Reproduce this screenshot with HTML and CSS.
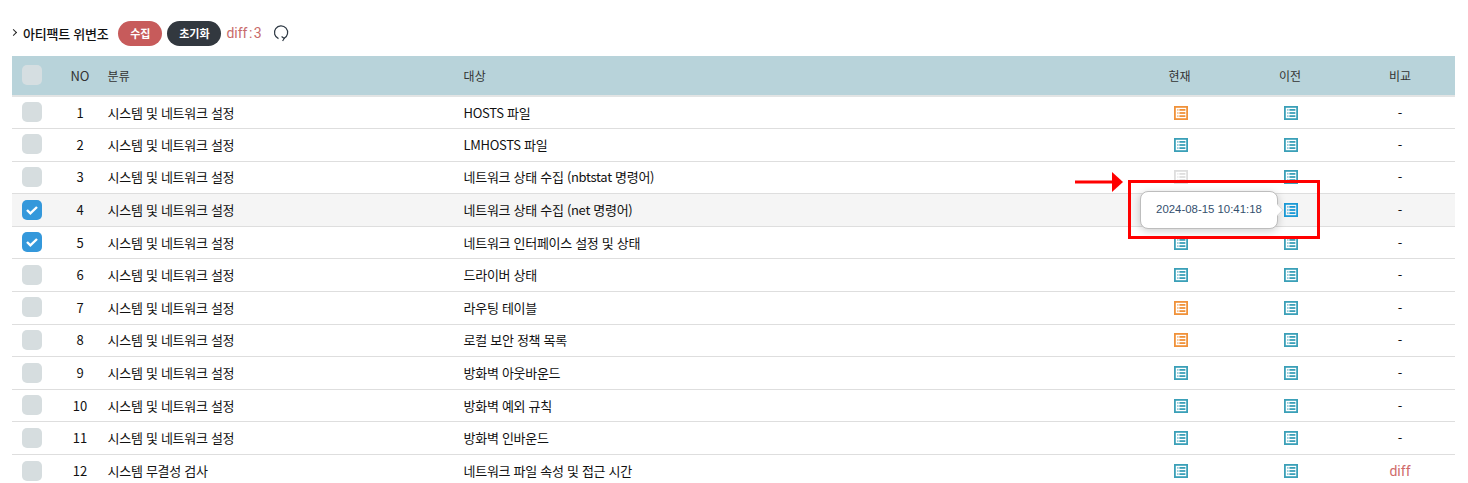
FILE: index.html
```html
<!DOCTYPE html>
<html lang="ko">
<head>
<meta charset="utf-8">
<title>아티팩트 위변조</title>
<link rel="stylesheet" href="styles.css">
</head>
<body>
<svg width="0" height="0" class="defs">
  <symbol id="doc" viewBox="0 0 14 14">
    <rect x="0.9" y="0.9" width="12.2" height="12.2" fill="none" stroke="currentColor" stroke-width="1.8"/>
    <rect x="3" y="3" width="1.6" height="1.8" fill="currentColor" opacity=".55"/>
    <rect x="5.4" y="3" width="6" height="1.8" fill="currentColor"/>
    <rect x="3" y="6.1" width="1.6" height="1.8" fill="currentColor" opacity=".55"/>
    <rect x="5.4" y="6.1" width="6" height="1.8" fill="currentColor"/>
    <rect x="3" y="9.2" width="1.6" height="1.8" fill="currentColor" opacity=".55"/>
    <rect x="5.4" y="9.2" width="6" height="1.8" fill="currentColor"/>
  </symbol>
</svg>
<div class="title-bar">
  <span class="chevron"></span>
  <strong class="title">아티팩트 위변조</strong>
  <button class="pill pill-red">수집</button>
  <button class="pill pill-dark">초기화</button>
  <span class="diff-count">diff : 3</span>
  <svg class="refresh" width="16" height="18" viewBox="0 0 16 18"><path d="M5.5 14.6A6.6 6.6 0 1 1 11 14.4" fill="none" stroke="#2f3a45" stroke-width="1.2"/><path d="M8.6 12.6l2.6 1.9-1.6 2.5" fill="none" stroke="#2f3a45" stroke-width="1.2"/></svg>
</div>
<table class="grid">
  <colgroup><col class="c-check"><col class="c-no"><col class="c-cat"><col class="c-target"><col class="c-cur"><col class="c-prev"><col class="c-cmp"></colgroup>
  <thead>
    <tr><th><span class="box"></span></th><th class="num">NO</th><th class="left">분류</th><th class="left">대상</th><th>현재</th><th>이전</th><th>비교</th></tr>
  </thead>
  <tbody>
    <tr><td><span class="box"></span></td><td class="num">1</td><td class="left">시스템 및 네트워크 설정</td><td class="left">HOSTS 파일</td><td><svg class="ico orange"><use href="#doc"/></svg></td><td><svg class="ico teal"><use href="#doc"/></svg></td><td>-</td></tr>
    <tr><td><span class="box"></span></td><td class="num">2</td><td class="left">시스템 및 네트워크 설정</td><td class="left">LMHOSTS 파일</td><td><svg class="ico teal"><use href="#doc"/></svg></td><td><svg class="ico teal"><use href="#doc"/></svg></td><td>-</td></tr>
    <tr><td><span class="box"></span></td><td class="num">3</td><td class="left">시스템 및 네트워크 설정</td><td class="left">네트워크 상태 수집 (nbtstat 명령어)</td><td><svg class="ico faded"><use href="#doc"/></svg></td><td><svg class="ico teal"><use href="#doc"/></svg></td><td>-</td></tr>
    <tr class="hover"><td><span class="box on"><svg width="14" height="12" viewBox="0 0 14 12"><path d="M2 6l3.4 3.4L12 3" fill="none" stroke="#fff" stroke-width="2.4"/></svg></span></td><td class="num">4</td><td class="left">시스템 및 네트워크 설정</td><td class="left">네트워크 상태 수집 (net 명령어)</td><td></td><td><svg class="ico blue"><use href="#doc"/></svg></td><td>-</td></tr>
    <tr><td><span class="box on"><svg width="14" height="12" viewBox="0 0 14 12"><path d="M2 6l3.4 3.4L12 3" fill="none" stroke="#fff" stroke-width="2.4"/></svg></span></td><td class="num">5</td><td class="left">시스템 및 네트워크 설정</td><td class="left">네트워크 인터페이스 설정 및 상태</td><td><svg class="ico teal"><use href="#doc"/></svg></td><td><svg class="ico teal"><use href="#doc"/></svg></td><td>-</td></tr>
    <tr><td><span class="box"></span></td><td class="num">6</td><td class="left">시스템 및 네트워크 설정</td><td class="left">드라이버 상태</td><td><svg class="ico teal"><use href="#doc"/></svg></td><td><svg class="ico teal"><use href="#doc"/></svg></td><td>-</td></tr>
    <tr><td><span class="box"></span></td><td class="num">7</td><td class="left">시스템 및 네트워크 설정</td><td class="left">라우팅 테이블</td><td><svg class="ico orange"><use href="#doc"/></svg></td><td><svg class="ico teal"><use href="#doc"/></svg></td><td>-</td></tr>
    <tr><td><span class="box"></span></td><td class="num">8</td><td class="left">시스템 및 네트워크 설정</td><td class="left">로컬 보안 정책 목록</td><td><svg class="ico orange"><use href="#doc"/></svg></td><td><svg class="ico teal"><use href="#doc"/></svg></td><td>-</td></tr>
    <tr><td><span class="box"></span></td><td class="num">9</td><td class="left">시스템 및 네트워크 설정</td><td class="left">방화벽 아웃바운드</td><td><svg class="ico teal"><use href="#doc"/></svg></td><td><svg class="ico teal"><use href="#doc"/></svg></td><td>-</td></tr>
    <tr><td><span class="box"></span></td><td class="num">10</td><td class="left">시스템 및 네트워크 설정</td><td class="left">방화벽 예외 규칙</td><td><svg class="ico teal"><use href="#doc"/></svg></td><td><svg class="ico teal"><use href="#doc"/></svg></td><td>-</td></tr>
    <tr><td><span class="box"></span></td><td class="num">11</td><td class="left">시스템 및 네트워크 설정</td><td class="left">방화벽 인바운드</td><td><svg class="ico teal"><use href="#doc"/></svg></td><td><svg class="ico teal"><use href="#doc"/></svg></td><td>-</td></tr>
    <tr><td><span class="box"></span></td><td class="num">12</td><td class="left">시스템 무결성 검사</td><td class="left">네트워크 파일 속성 및 접근 시간</td><td><svg class="ico teal"><use href="#doc"/></svg></td><td><svg class="ico teal"><use href="#doc"/></svg></td><td class="diff-link">diff</td></tr>
  </tbody>
</table>
<div class="tooltip">2024-08-15 10:41:18</div>
<div class="callout"></div>
<svg class="arrow" width="50" height="20" viewBox="0 0 50 20"><path d="M0 10H38" stroke="#f00" stroke-width="3"/><path d="M37 0L48 10 37 20z" fill="#f00"/></svg>
</body>
</html>
```
FILE: styles.css
```css
html, body { margin: 0; padding: 0; background: #fff; overflow: hidden; }
body {
  width: 1468px;
  height: 483px;
  font-family: "Noto Sans CJK KR", Roboto, sans-serif;
  font-size: 13px;
  color: #111;
  position: relative;
}
.defs { position: absolute; }
.title-bar {
  display: flex;
  align-items: center;
  height: 26px;
  padding: 20px 0 10px 11px;
}
.chevron {
  width: 4px;
  height: 4px;
  border-top: 1px solid #222;
  border-right: 1px solid #222;
  transform: rotate(45deg);
  margin-right: 7px;
  margin-top: -2px;
}
.title { font-size: 13px; font-weight: 500; color: #111; letter-spacing: -0.25px; margin-right: 10px; }
.pill {
  border: 0;
  height: 25px;
  border-radius: 13px;
  color: #fff;
  font: 700 11px "Noto Sans CJK KR", Roboto, sans-serif;
  padding: 0;
}
.pill-red { background: #c75b5b; width: 44px; margin-right: 5px; }
.pill-dark { background: #32383f; width: 54px; margin-right: 5px; }
.diff-count { color: #c86a6a; font: 14px Roboto, sans-serif; word-spacing: -2px; margin-right: 11px; }
.refresh { margin-top: -1px; }
.grid {
  border-collapse: collapse;
  table-layout: fixed;
  width: 1443px;
  margin-left: 12px;
}
.c-check { width: 42px; }
.c-no { width: 46px; }
.c-cat { width: 356px; }
.c-target { width: 668px; }
.c-cur { width: 111px; }
.c-prev { width: 110px; }
.c-cmp { width: 110px; }
th, td { padding: 0; text-align: center; font-weight: 400; vertical-align: middle; }
thead tr { height: 40px; background: #b8d3da; border-bottom: 2px solid #e2e4e4; }
thead th { color: #333; font-size: 12px; padding-bottom: 1px; }
tbody tr { height: 32.6px; border-bottom: 1px solid #dedede; }
tbody tr:last-child { border-bottom: 0; }
tr.hover { background: #f5f5f5; }
td { padding-bottom: 1px; }
.left { text-align: left; padding-left: 7.6px; }
td.left { font-size: 13px; letter-spacing: -0.3px; color: #111; }
.num { text-align: center; padding-left: 6px; font-size: 13px; }
thead .num { font-size: 13px; color: #333; }
.box {
  display: flex;
  align-items: center;
  justify-content: center;
  width: 20px;
  height: 20px;
  border-radius: 5px;
  background: #d6dddf;
  margin-left: 10px;
}
thead .box { background: #d5dee1; }
.box.on { background: #3498db; }
.ico { width: 14px; height: 14px; display: block; margin: 1px auto 0; transform: translateX(1px); }
.orange { color: #f0923a; }
.teal { color: #3ba0b8; }
.blue { color: #1b9ad6; }
.faded { color: #dedede; }
.diff-link { color: #cf6a6a; font: 14px Roboto, sans-serif; }
.tooltip {
  position: absolute;
  left: 1140px;
  top: 191px;
  width: 138px;
  height: 38px;
  box-sizing: border-box;
  background: #fff;
  border: 1px solid #bdbdbd;
  border-radius: 8px;
  box-shadow: 0 2px 8px rgba(0,0,0,.2);
  text-align: center;
  font: 11.4px/35px "Liberation Sans", sans-serif;
  color: #34506e;
}
.tooltip::after {
  content: "";
  position: absolute;
  right: -5px;
  top: 14px;
  width: 7px;
  height: 7px;
  background: #fff;
  border-top: 1px solid #ddd;
  border-right: 1px solid #ddd;
  transform: rotate(45deg);
}
.callout {
  position: absolute;
  left: 1128px;
  top: 180px;
  width: 186px;
  height: 53px;
  border: 3px solid #f00;
}
.arrow { position: absolute; left: 1075px; top: 172px; }
```
